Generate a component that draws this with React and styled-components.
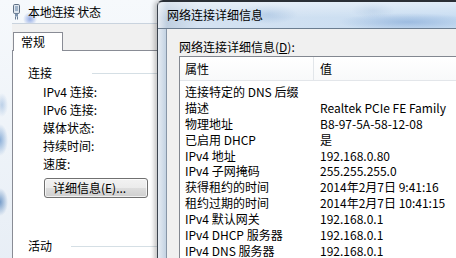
import React from "react";
import styled, { createGlobalStyle } from "styled-components";

const GlobalStyle = createGlobalStyle`
  html, body {
    margin: 0;
    padding: 0;
    overflow: hidden;
  }
  body {
    font-family: "Noto Sans CJK SC", "Noto Sans", sans-serif;
    font-size: 12px;
    color: #000;
  }
`;

const Desktop = styled.div`
  position: relative;
  width: 456px;
  height: 258px;
  overflow: hidden;
  background: #dfe8f1;
`;

/* ---------- left window: 本地连接 状态 ---------- */

const LeftWindow = styled.div`
  position: absolute;
  left: 0;
  top: 0;
  width: 175px;
  height: 290px;
  display: flex;
  flex-direction: column;
  background:
    radial-gradient(circle at 30px 19px, rgba(70, 110, 210, 0.55), transparent 7px),
    radial-gradient(ellipse 8px 16px at 0px 140px, rgba(60, 120, 190, 0.55), transparent),
    radial-gradient(ellipse 8px 14px at 0px 202px, rgba(40, 100, 170, 0.6), transparent),
    radial-gradient(ellipse 6px 12px at 2px 105px, rgba(90, 140, 200, 0.35), transparent),
    linear-gradient(#f6f9fc, #e6edf5);
`;

const TitleBar = styled.div`
  height: ${({ $h }) => $h}px;
  flex: none;
  display: flex;
  align-items: center;
  gap: ${({ $gap }) => $gap || 0}px;
  padding-left: ${({ $pad }) => $pad}px;
  box-sizing: border-box;
  font-size: 12px;
  line-height: 14px;
`;

const TitleText = styled.span`
  color: #000;
  letter-spacing: ${({ $ls }) => $ls || 0}px;
`;

const LeftBody = styled.div`
  flex: 1;
  display: flex;
  padding-left: 12px;
`;

const LeftClient = styled.div`
  flex: 1;
  background: #f0f0f0;
  border-top: 1px solid #c9d3de;
  display: flex;
  flex-direction: column;
  padding-top: 8px;
`;

const TabStrip = styled.div`
  display: flex;
  padding-left: 1px;
  height: 18px;
  position: relative;
  z-index: 1;
`;

const Tab = styled.div`
  width: 50px;
  box-sizing: border-box;
  background: #fff;
  border: 1px solid #898c95;
  border-bottom: none;
  padding: 1px 0 0 7px;
  line-height: 16px;
  height: 19px;
`;

const TabPanel = styled.div`
  flex: 1;
  background: #fff;
  border: 1px solid #898c95;
  border-right: none;
  padding: 13px 0 0 15px;
`;

const GroupTitle = styled.div`
  display: flex;
  align-items: center;
  line-height: 18px;
  margin-top: ${({ $mt }) => $mt || 0}px;
  &::after {
    content: "";
    flex: 1;
    height: 0;
    margin-left: ${({ $gap }) => $gap}px;
    border-top: 1px solid #d5dfe5;
  }
`;

const InfoList = styled.div`
  padding-left: 15px;
  padding-top: 1px;
`;

const InfoRow = styled.div`
  line-height: 18px;
  height: 18px;
`;

const Button = styled.button`
  margin: 5px 0 0 16px;
  width: 104px;
  height: 20px;
  padding: 0 0 0 8px;
  text-align: left;
  font-family: inherit;
  font-size: 12px;
  line-height: 16px;
  color: #000;
  border: 1px solid #707070;
  border-radius: 3px;
  background: linear-gradient(#f2f2f2 0%, #ebebeb 50%, #dddddd 51%, #cfcfcf 100%);
  box-shadow: inset 0 0 0 1px rgba(255, 255, 255, 0.7);
`;

/* ---------- right window: 网络连接详细信息 ---------- */

const RightWindow = styled.div`
  position: absolute;
  left: 157px;
  top: 0;
  width: 320px;
  height: 290px;
  display: flex;
  flex-direction: column;
  border-top: 2px solid #2a2f36;
  border-left: 1px solid #3b434d;
  border-radius: 6px 0 0 0;
  box-shadow: -3px 0 4px rgba(0, 0, 0, 0.22);
  background:
    radial-gradient(ellipse 70px 9px at 250px 20px, rgba(120, 160, 210, 0.55), transparent),
    radial-gradient(ellipse 30px 10px at 110px 12px, rgba(140, 175, 215, 0.45), transparent),
    radial-gradient(ellipse 22px 8px at 215px 8px, rgba(150, 180, 215, 0.4), transparent),
    linear-gradient(90deg, #e6ecf3 0px, #bfcfe0 9px, #d4e2f1 40px, #c6dcf2 100%);
`;

const RightTitle = styled(TitleBar)`
  border-bottom: 1px solid #6b7d90;
  background: linear-gradient(rgba(255, 255, 255, 0.45), rgba(255, 255, 255, 0) 60%);
`;

const RightBody = styled.div`
  flex: 1;
  display: flex;
  padding-left: 8px;
`;

const RightClient = styled.div`
  flex: 1;
  background: #f0f0f0;
  border-left: 1px solid #8795a6;
  padding: 10px 0 0 12px;
  display: flex;
  flex-direction: column;
`;

const FieldLabel = styled.div`
  line-height: 15px;
  margin-bottom: 2px;
  u {
    text-decoration: underline;
  }
`;

const ListBox = styled.div`
  flex: 1;
  background: #fff;
  border: 1px solid #828790;
  border-right: none;
`;

const HeaderRow = styled.div`
  display: grid;
  grid-template-columns: 134px 1fr;
  height: 23px;
  border-bottom: 1px solid #e3e6ea;
  background: linear-gradient(#ffffff, #f8f9fa);
`;

const HeaderCell = styled.div`
  display: flex;
  align-items: center;
  padding-left: ${({ $pad }) => $pad}px;
  border-right: ${({ $sep }) => ($sep ? "1px solid #e2e6ea" : "none")};
`;

const Rows = styled.div`
  padding-top: 3px;
`;

const DataRow = styled.div`
  display: grid;
  grid-template-columns: 134px 1fr;
  height: 15.9px;
  line-height: 16px;
  white-space: nowrap;
`;

const Cell = styled.div`
  padding-left: ${({ $pad }) => $pad}px;
  overflow: hidden;
`;

const PlugIcon = () => (
  <svg width="8" height="16" viewBox="0 0 8 16">
    <rect x="0.5" y="0.5" width="6" height="9" rx="1.2" fill="#dfe6ee" stroke="#5e6f84" />
    <rect x="2" y="2" width="3" height="5" fill="#9fb3c9" />
    <rect x="2" y="9.5" width="3" height="3" fill="#7d93ad" />
    <line x1="2.5" y1="12.5" x2="2.5" y2="15.5" stroke="#6b7f96" />
    <line x1="4.5" y1="12.5" x2="4.5" y2="15.5" stroke="#6b7f96" />
  </svg>
);

const leftRows = ["IPv4 连接:", "IPv6 连接:", "媒体状态:", "持续时间:", "速度:"];

const details = [
  ["连接特定的 DNS 后缀", ""],
  ["描述", "Realtek PCIe FE Family"],
  ["物理地址", "B8-97-5A-58-12-08"],
  ["已启用 DHCP", "是"],
  ["IPv4 地址", "192.168.0.80"],
  ["IPv4 子网掩码", "255.255.255.0"],
  ["获得租约的时间", "2014年2月7日 9:41:16"],
  ["租约过期的时间", "2014年2月7日 10:41:15"],
  ["IPv4 默认网关", "192.168.0.1"],
  ["IPv4 DHCP 服务器", "192.168.0.1"],
  ["IPv4 DNS 服务器", "192.168.0.1"],
];

export default function App() {
  return (
    <>
      <GlobalStyle />
      <Desktop>
        <LeftWindow>
          <TitleBar $h={23} $pad={13} $gap={7}>
            <PlugIcon />
            <TitleText $ls={-0.3}>本地连接 状态</TitleText>
          </TitleBar>
          <LeftBody>
            <LeftClient>
              <TabStrip>
                <Tab>常规</Tab>
              </TabStrip>
              <TabPanel>
                <GroupTitle $gap={40}>连接</GroupTitle>
                <InfoList>
                  {leftRows.map((r) => (
                    <InfoRow key={r}>{r}</InfoRow>
                  ))}
                </InfoList>
                <Button>详细信息(E)...</Button>
                <GroupTitle $gap={19} $mt={39}>活动</GroupTitle>
              </TabPanel>
            </LeftClient>
          </LeftBody>
        </LeftWindow>

        <RightWindow>
          <RightTitle $h={27} $pad={9}>
            <TitleText>网络连接详细信息</TitleText>
          </RightTitle>
          <RightBody>
            <RightClient>
              <FieldLabel>
                网络连接详细信息(<u>D</u>):
              </FieldLabel>
              <ListBox>
                <HeaderRow>
                  <HeaderCell $pad={5} $sep>属性</HeaderCell>
                  <HeaderCell $pad={6}>值</HeaderCell>
                </HeaderRow>
                <Rows>
                  {details.map(([k, v]) => (
                    <DataRow key={k}>
                      <Cell $pad={5}>{k}</Cell>
                      <Cell $pad={6}>{v}</Cell>
                    </DataRow>
                  ))}
                </Rows>
              </ListBox>
            </RightClient>
          </RightBody>
        </RightWindow>
      </Desktop>
    </>
  );
}
